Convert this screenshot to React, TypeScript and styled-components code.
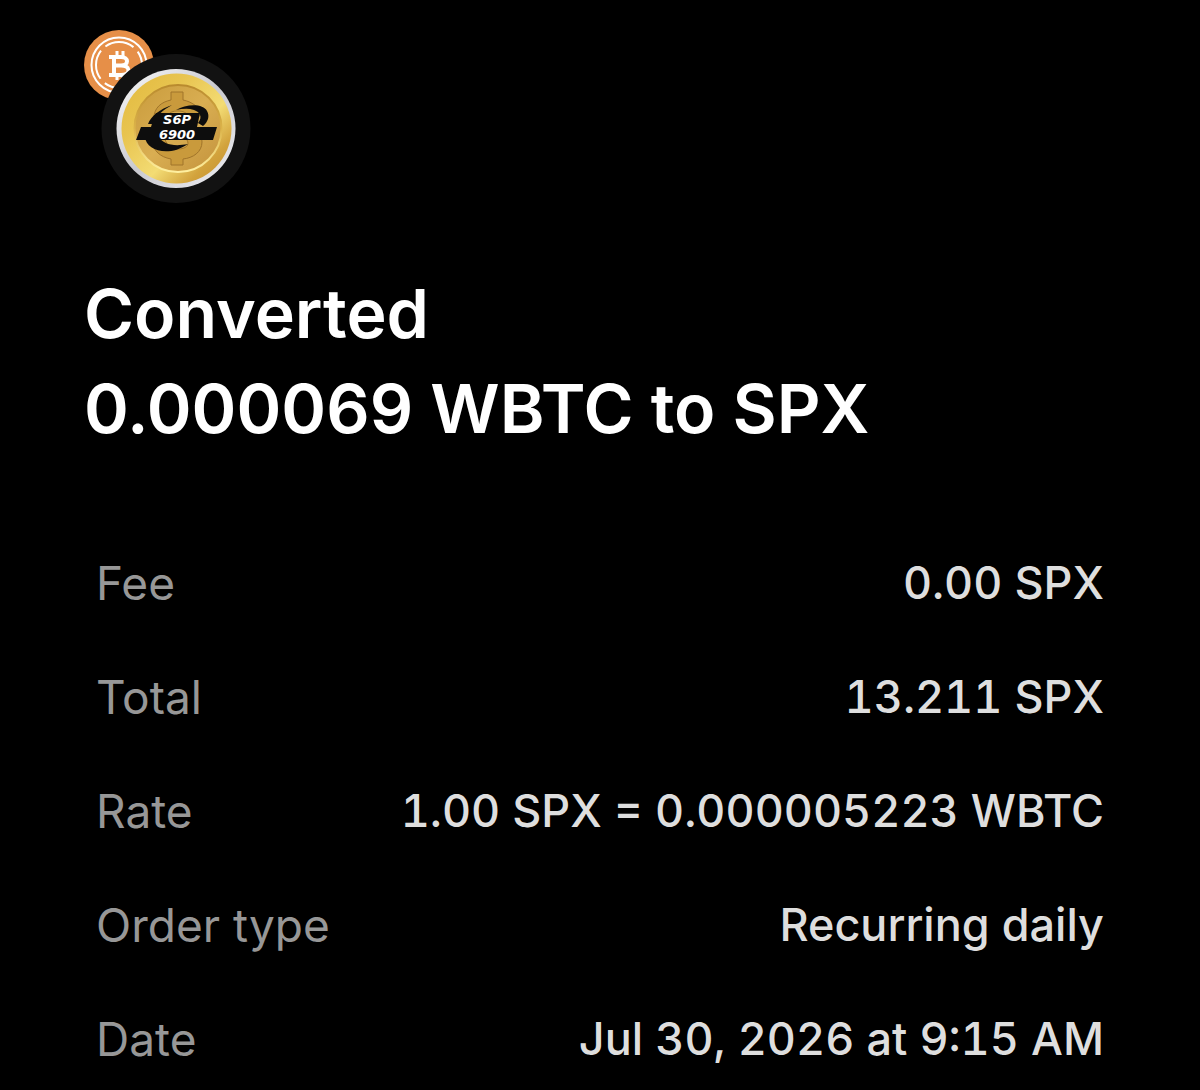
import React from 'react';
import styled, { createGlobalStyle } from 'styled-components';

const GlobalStyle = createGlobalStyle`
  body {
    margin: 0;
    background-color: #000000;
    font-family: Inter, 'Liberation Sans', sans-serif;
  }
`;

const Page = styled.main`
  min-height: 100vh;
  box-sizing: border-box;
  padding: 30px 84px 20px;
  overflow: hidden;
`;

const AssetIcons = styled.svg`
  display: block;
  width: 168px;
  height: 174px;
`;

const LogoText = styled.text`
  font-family: 'DejaVu Sans', sans-serif;
  font-size: 13px;
  font-weight: 700;
  font-style: italic;
  text-anchor: middle;
  fill: #ffffff;
`;

const Title = styled.h1`
  margin: 62px 0 0;
  color: #ffffff;
  font-size: 68px;
  font-weight: 600;
  line-height: 95px;
`;

const Details = styled.dl`
  display: flex;
  flex-direction: column;
  gap: 56px;
  margin: 98px 12px 0;
`;

const Row = styled.div`
  display: flex;
  justify-content: space-between;
  align-items: center;
  line-height: 58px;
`;

const Label = styled.dt`
  color: #979797;
  font-size: 46px;
  font-weight: 400;
`;

const Value = styled.dd`
  margin: 0;
  color: #dedede;
  font-size: 45px;
  font-weight: 500;
  text-align: right;
  font-variant-numeric: tabular-nums;
`;

const details = [
  { label: 'Fee', value: '0.00 SPX' },
  { label: 'Total', value: '13.211 SPX' },
  { label: 'Rate', value: '1.00 SPX = 0.000005223 WBTC' },
  { label: 'Order type', value: 'Recurring daily' },
  { label: 'Date', value: 'Jul 30, 2026 at 9:15 AM' },
];

const AssetPair: React.FC = () => (
  <AssetIcons viewBox="84 30 168 174" role="img" aria-label="WBTC to SPX">
    <defs>
      <linearGradient id="silver" x1="0" y1="0" x2="1" y2="1">
        <stop offset="0" stopColor="#fafafa" />
        <stop offset="0.5" stopColor="#c9c9cf" />
        <stop offset="1" stopColor="#f1f1f4" />
      </linearGradient>
      <linearGradient id="rim" x1="0" y1="0" x2="1" y2="1">
        <stop offset="0" stopColor="#e2b93c" />
        <stop offset="0.3" stopColor="#e8c450" />
        <stop offset="0.6" stopColor="#f3dc74" />
        <stop offset="0.8" stopColor="#d2a23c" />
        <stop offset="1" stopColor="#c08c30" />
      </linearGradient>
      <linearGradient id="face" x1="0" y1="0" x2="1" y2="1">
        <stop offset="0" stopColor="#c99b3c" />
        <stop offset="0.5" stopColor="#d9ae52" />
        <stop offset="1" stopColor="#c3923c" />
      </linearGradient>
      <linearGradient id="edge" x1="0" y1="0" x2="0" y2="1">
        <stop offset="0" stopColor="#b98a2e" />
        <stop offset="0.5" stopColor="#dcb44a" />
        <stop offset="1" stopColor="#fff0a0" />
      </linearGradient>
    </defs>

    {/* wrapped bitcoin */}
    <circle cx="119" cy="65" r="35" fill="#e68f48" />
    <g fill="none" stroke="#ffffff" strokeWidth="2">
      <circle cx="119" cy="65" r="27.500" />
      <circle cx="119" cy="65" r="23" strokeDasharray="30.1 6" strokeDashoffset="-21" />
    </g>
    <g fill="none" stroke="#ffffff" strokeWidth="4">
      <path d="M109 57H121C129 57 129 65.500 121 65.500H114M121 65.500C131 65.500 131 75 121 75H109M114 57V75" />
      <path strokeWidth="3" d="M117 51V57M123 51V57M117 75V80M123 75V80" />
    </g>

    {/* SPX coin */}
    <circle cx="176" cy="128.500" r="74.500" fill="#121212" />
    <circle cx="176" cy="128.500" r="59.500" fill="url(#silver)" />
    <circle cx="176.500" cy="128.500" r="55" fill="url(#rim)" />
    <circle cx="178" cy="128.500" r="43.500" fill="url(#face)" stroke="url(#edge)" strokeWidth="2" />
    <g fill="#c99a3c" stroke="#a0742a" strokeWidth="1">
      <path d="M171 92H183V100C193 102 200 108 202 115L190 119C187 112 183 111 177 111C169 111 166 116 169 120C173 125 202 124 202 142C202 152 193 158 183 159V165H171V159C160 157 154 151 152 142L165 139C167 146 171 149 178 149C186 149 190 145 187 140C183 134 154 136 154 118C154 108 161 102 171 100Z" />
    </g>
    <g fill="#0d0d0d">
      <path d="M176 110C186 104 203 103 207 111C210 116 208 122 203 126L198 123C203 117 200 112 194 110C188 108 182 109 176 110Z" />
      <path d="M172 105C160 109 151 116 148 124H153C157 115 163 110 172 105Z" />
      <path d="M145 137C146 150 168 158 188 144C173 147 163 144 159 137Z" />
      <path d="M153 120L156 113H200L197 127H217L213 140H136L141 127H151Z" />
    </g>
    <LogoText x="177" y="124">S6P</LogoText>
    <LogoText x="177" y="139">6900</LogoText>
  </AssetIcons>
);

const App: React.FC = () => {
  return (
    <>
      <GlobalStyle />
      <Page>
        <AssetPair />
        <Title>
          Converted
          <br />
          0.000069 WBTC to SPX
        </Title>
        <Details>
          {details.map(({ label, value }) => (
            <Row key={label}>
              <Label>{label}</Label>
              <Value>{value}</Value>
            </Row>
          ))}
        </Details>
      </Page>
    </>
  );
};

export default App;
